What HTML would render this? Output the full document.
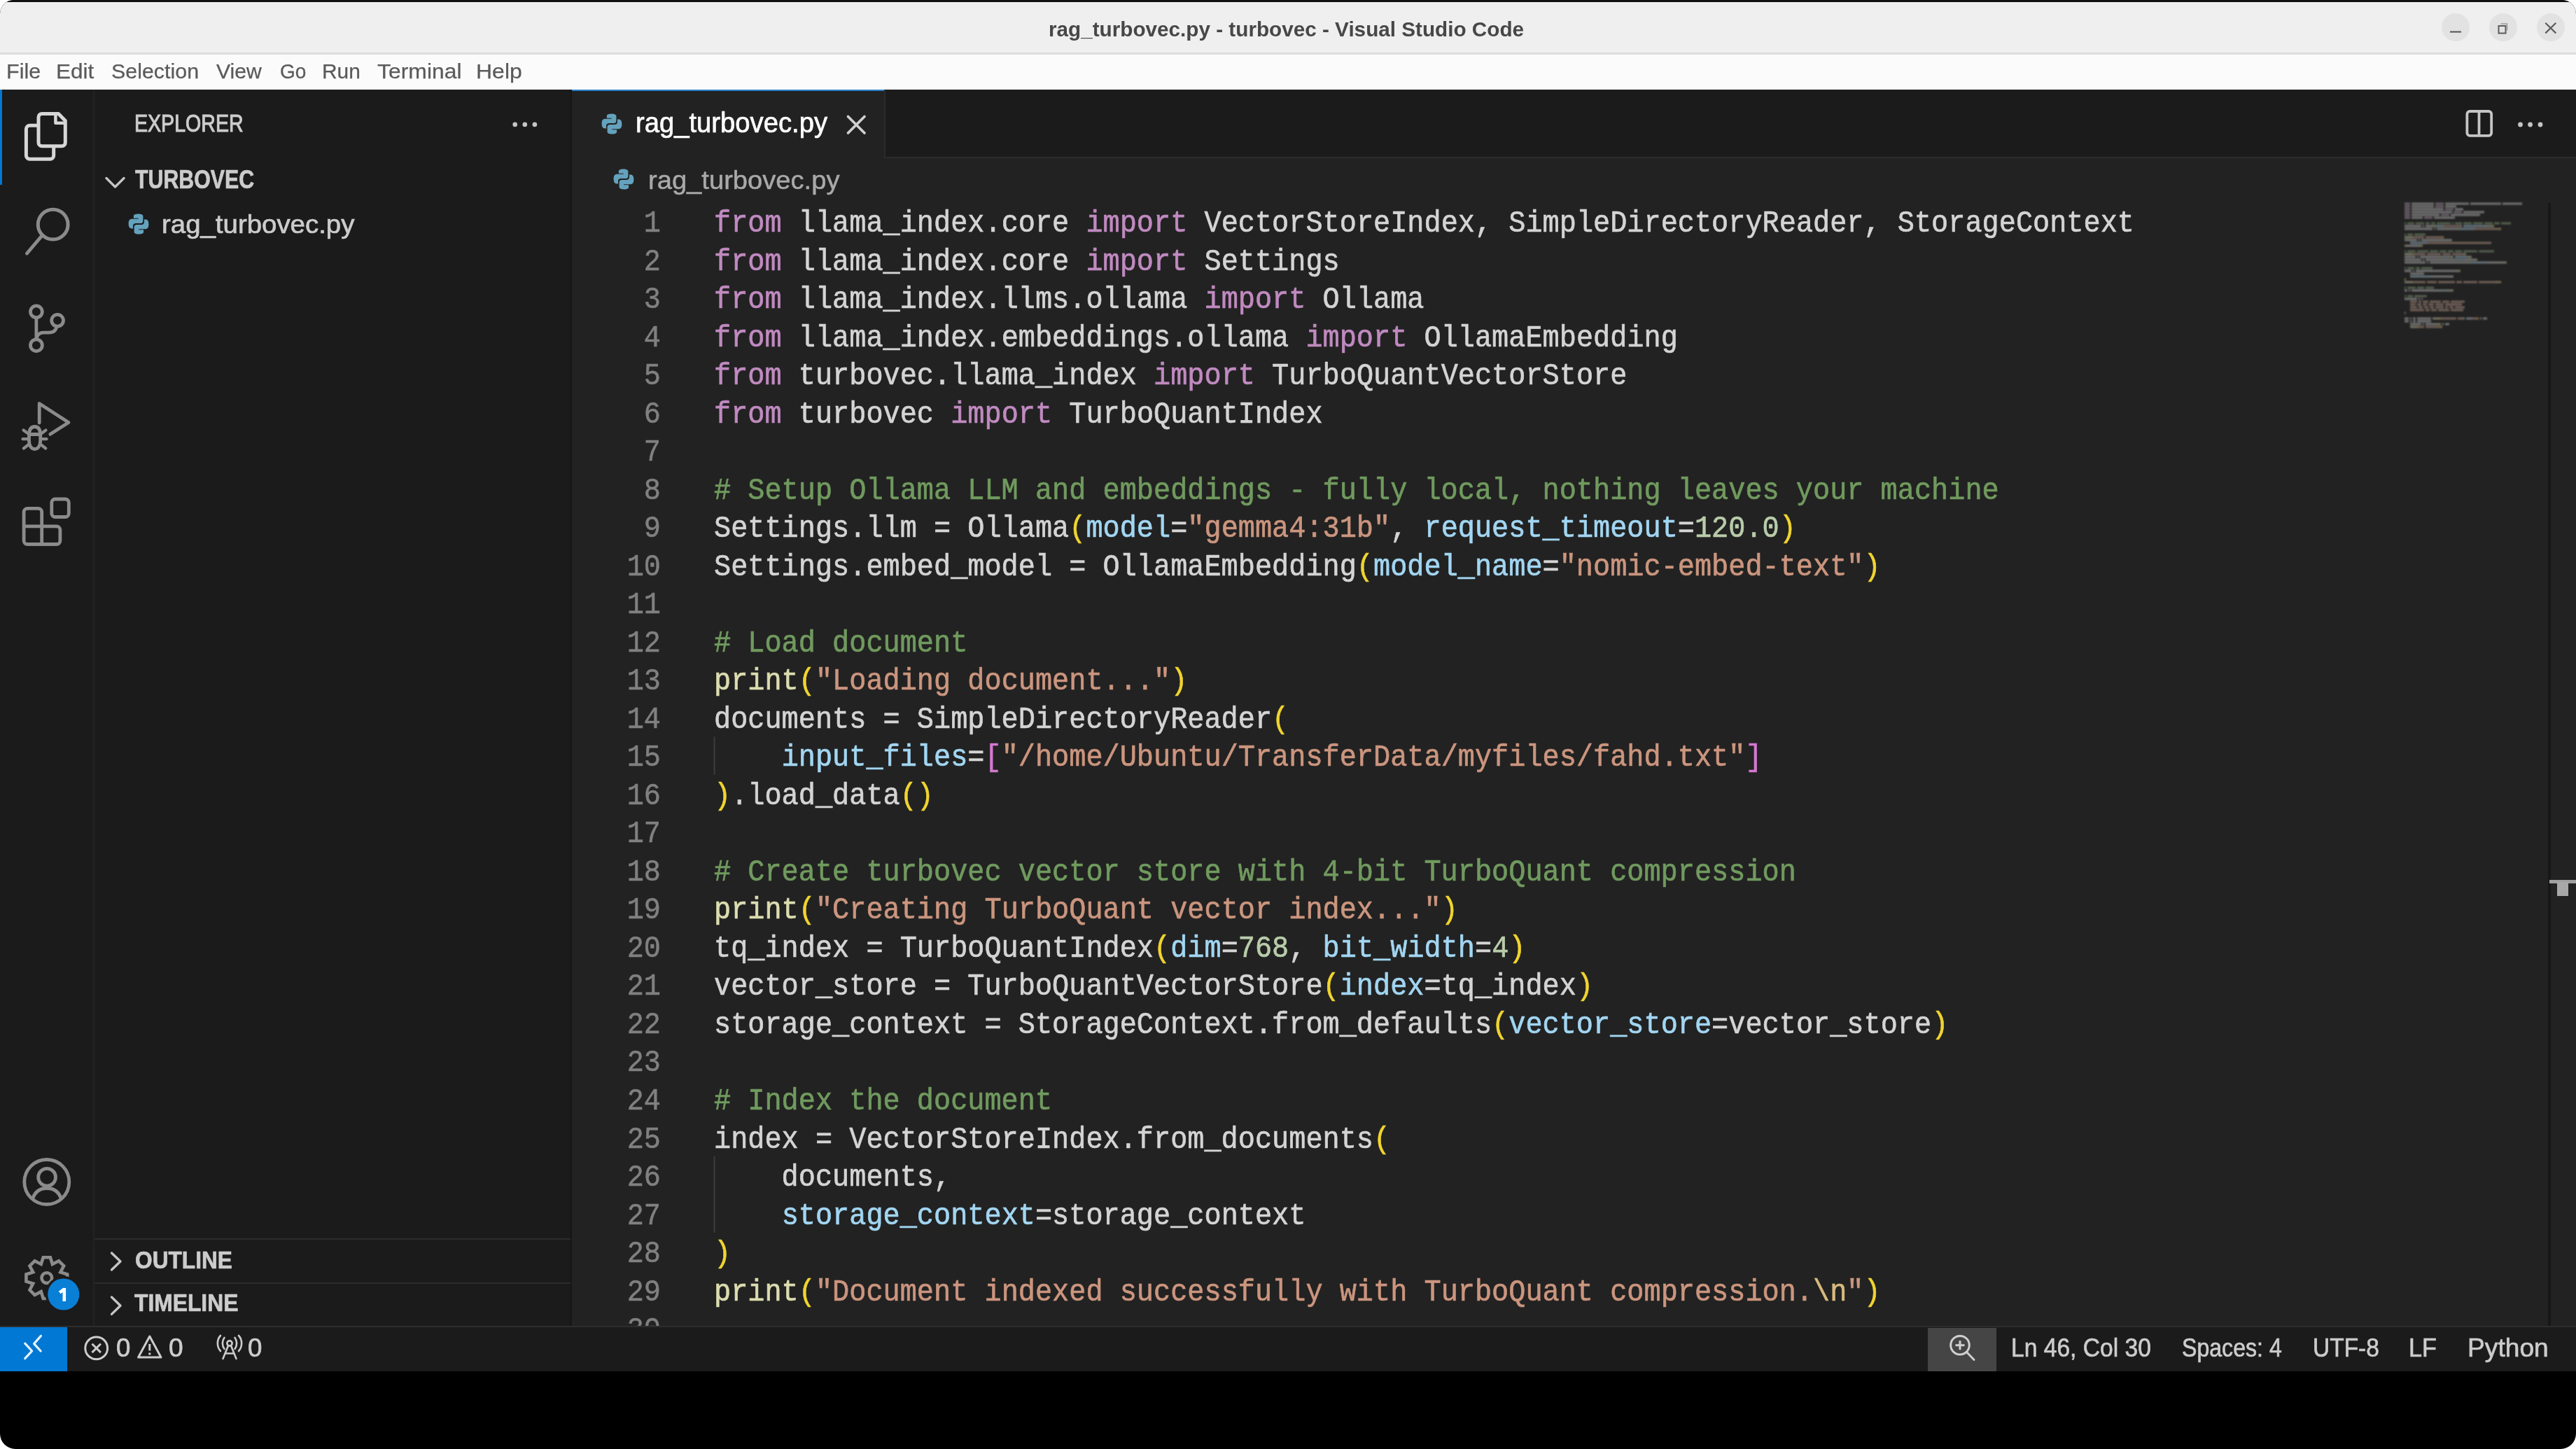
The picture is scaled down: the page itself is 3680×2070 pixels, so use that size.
<!DOCTYPE html>
<html><head><meta charset="utf-8"><style>
html,body{margin:0;padding:0;}
body{width:3680px;height:2070px;overflow:hidden;background:#ffffff;position:relative;font-family:"Liberation Sans", sans-serif;}
#win{position:absolute;left:0;top:0;width:3680px;height:2070px;overflow:hidden;border-radius:20px 20px 22px 22px;background:#000;}
.abs{position:absolute;}
.t{position:absolute;white-space:pre;transform-origin:0 0;-webkit-text-stroke:0.7px currentColor;}
.cl{position:absolute;left:1020.0px;white-space:pre;font-family:"Liberation Mono", monospace;font-size:40.252px;line-height:54.52px;height:54.52px;color:#d4d4d4;-webkit-text-stroke:0.6px currentColor;transform:scaleY(1.08);transform-origin:0 37.97px;}
.ln{position:absolute;left:744px;-webkit-text-stroke:0.5px currentColor;width:200px;text-align:right;white-space:pre;font-family:"Liberation Mono", monospace;font-size:40.252px;line-height:54.52px;height:54.52px;color:#808080;transform:scaleY(1.08);transform-origin:0 37.97px;}
.kw{color:#c08ac0} .cm{color:#709a5e} .st{color:#cb957e} .pa{color:#a2d6f2} .nu{color:#b8ccaa} .fn{color:#dcdcb0} .b1{color:#f0d430} .b2{color:#d478d0} .es{color:#d7ba7d}
</style></head>
<body><div id="win">
<div class="abs" style="left:0;top:0;width:3680px;height:3px;background:#111"></div>
<div class="abs" style="left:0;top:3px;width:3680px;height:72px;background:#efefef"></div>
<div class="abs" style="left:0;top:75px;width:3680px;height:3px;background:#dddddd"></div>
<div class="abs" style="left:0;top:78px;width:3680px;height:50px;background:#fbfbfb"></div>
<div class="abs" style="left:3488px;top:19px;width:40px;height:40px;border-radius:50%;background:#e2e2e2"></div>
<div class="abs" style="left:3555.6px;top:19px;width:40px;height:40px;border-radius:50%;background:#e2e2e2"></div>
<div class="abs" style="left:3624px;top:19px;width:40px;height:40px;border-radius:50%;background:#e2e2e2"></div>
<svg class="abs" style="left:3480px;top:11px" width="56" height="56" viewBox="0 0 56 56"><line x1="20" y1="34.5" x2="36" y2="34.5" stroke="#5c5c5c" stroke-width="2.2"/></svg>
<svg class="abs" style="left:3548px;top:11px" width="56" height="56" viewBox="0 0 56 56"><rect x="21.5" y="26" width="10" height="10.5" fill="none" stroke="#5c5c5c" stroke-width="2"/><path d="M24.5 23 H33.5 V32.5" fill="none" stroke="#9a9a9a" stroke-width="1.4"/></svg>
<svg class="abs" style="left:3616px;top:11px" width="56" height="56" viewBox="0 0 56 56"><path d="M20.3 21.7 L35.3 36.4 M35.3 21.7 L20.3 36.4" stroke="#5c5c5c" stroke-width="2.2"/></svg>
<div class="abs" style="left:0;top:128px;width:3680px;height:1768px;background:#222222"></div>
<div class="abs" style="left:0;top:128px;width:133px;height:1768px;background:#1b1b1b"></div>
<div class="abs" style="left:133px;top:128px;width:2px;height:1768px;background:#222222"></div>
<div class="abs" style="left:0;top:128px;width:3px;height:136px;background:#0078d4"></div>
<div class="abs" style="left:135px;top:128px;width:680px;height:1768px;background:#1b1b1b"></div>
<div class="abs" style="left:814px;top:128px;width:3px;height:1768px;background:#171717"></div>
<div class="abs" style="left:135px;top:1769px;width:680px;height:2px;background:#2b2b2b"></div>
<div class="abs" style="left:135px;top:1832px;width:680px;height:2px;background:#2b2b2b"></div>
<div class="abs" style="left:817px;top:128px;width:2863px;height:96px;background:#1b1b1b"></div>
<div class="abs" style="left:817px;top:224px;width:2863px;height:2px;background:#2b2b2b"></div>
<div class="abs" style="left:817px;top:128px;width:446px;height:98px;background:#222222"></div>
<div class="abs" style="left:1263px;top:128px;width:2px;height:96px;background:#2b2b2b"></div>
<div class="abs" style="left:817px;top:128px;width:446px;height:2px;background:#2a7fc8"></div>
<div class="abs" style="left:3640px;top:290px;width:4px;height:1604px;background:#171717"></div>
<div class="abs" style="left:3642px;top:1257px;width:38px;height:5px;background:#a0a0a0"></div>
<div class="abs" style="left:3653px;top:1260px;width:16px;height:20px;background:#a8a8a8"></div>
<div class="abs" style="left:0;top:1894px;width:3680px;height:2px;background:#2d2d2d"></div>
<div class="abs" style="left:0;top:1896px;width:3680px;height:63px;background:#1b1b1b"></div>
<div class="abs" style="left:0;top:1896px;width:96px;height:63px;background:#0078d4"></div>
<div class="abs" style="left:2754px;top:1897px;width:98px;height:62px;background:#454545"></div>
<svg class="abs" style="left:182px;top:304px" width="32" height="32" viewBox="0 0 32 32"><path fill="#64a2bd" d="M15.6 1.5c-7.1 0-6.7 3.1-6.7 3.1v3.2h6.8v1H6.2S1.6 8.3 1.6 15.5s4 6.9 4 6.9h2.4v-3.3s-.1-4 3.9-4h6.7s3.8.1 3.8-3.7V5.2s.6-3.7-6.8-3.7z"/><path fill="#64a2bd" d="M16.4 30.5c7.1 0 6.7-3.1 6.7-3.1v-3.2h-6.8v-1h9.5s4.6.5 4.6-6.7-4-6.9-4-6.9H24v3.3s.1 4-3.9 4h-6.7s-3.8-.1-3.8 3.7v6.3s-.6 3.6 6.8 3.6z"/></svg>
<svg class="abs" style="left:858px;top:161px" width="32" height="32" viewBox="0 0 32 32"><path fill="#64a2bd" d="M15.6 1.5c-7.1 0-6.7 3.1-6.7 3.1v3.2h6.8v1H6.2S1.6 8.3 1.6 15.5s4 6.9 4 6.9h2.4v-3.3s-.1-4 3.9-4h6.7s3.8.1 3.8-3.7V5.2s.6-3.7-6.8-3.7z"/><path fill="#64a2bd" d="M16.4 30.5c7.1 0 6.7-3.1 6.7-3.1v-3.2h-6.8v-1h9.5s4.6.5 4.6-6.7-4-6.9-4-6.9H24v3.3s.1 4-3.9 4h-6.7s-3.8-.1-3.8 3.7v6.3s-.6 3.6 6.8 3.6z"/></svg>
<svg class="abs" style="left:875px;top:240px" width="32" height="32" viewBox="0 0 32 32"><path fill="#64a2bd" d="M15.6 1.5c-7.1 0-6.7 3.1-6.7 3.1v3.2h6.8v1H6.2S1.6 8.3 1.6 15.5s4 6.9 4 6.9h2.4v-3.3s-.1-4 3.9-4h6.7s3.8.1 3.8-3.7V5.2s.6-3.7-6.8-3.7z"/><path fill="#64a2bd" d="M16.4 30.5c7.1 0 6.7-3.1 6.7-3.1v-3.2h-6.8v-1h9.5s4.6.5 4.6-6.7-4-6.9-4-6.9H24v3.3s.1 4-3.9 4h-6.7s-3.8-.1-3.8 3.7v6.3s-.6 3.6 6.8 3.6z"/></svg>
<div class="t" style="left:1497.67px;top:26.55px;font-size:29.35px;line-height:29.35px;color:#474747;font-weight:bold;transform:scaleX(1.0117);-webkit-text-stroke:0.0px currentColor">rag_turbovec.py - turbovec - Visual Studio Code</div>
<div class="t" style="left:8.76px;top:87.28px;font-size:30.14px;line-height:30.14px;color:#5a5a5a;transform:scaleX(1.0129);-webkit-text-stroke:0.25px currentColor">File</div>
<div class="t" style="left:80.08px;top:87.28px;font-size:30.14px;line-height:30.14px;color:#5a5a5a;transform:scaleX(1.0456);-webkit-text-stroke:0.25px currentColor">Edit</div>
<div class="t" style="left:159.43px;top:87.28px;font-size:30.14px;line-height:30.14px;color:#5a5a5a;transform:scaleX(1.0090);-webkit-text-stroke:0.25px currentColor">Selection</div>
<div class="t" style="left:309.20px;top:87.28px;font-size:30.14px;line-height:30.14px;color:#5a5a5a;transform:scaleX(1.0019);-webkit-text-stroke:0.25px currentColor">View</div>
<div class="t" style="left:399.90px;top:87.28px;font-size:30.14px;line-height:30.14px;color:#5a5a5a;transform:scaleX(0.9289);-webkit-text-stroke:0.25px currentColor">Go</div>
<div class="t" style="left:460.30px;top:87.28px;font-size:30.14px;line-height:30.14px;color:#5a5a5a;transform:scaleX(0.9932);-webkit-text-stroke:0.25px currentColor">Run</div>
<div class="t" style="left:539.36px;top:87.28px;font-size:30.14px;line-height:30.14px;color:#5a5a5a;transform:scaleX(1.0589);-webkit-text-stroke:0.25px currentColor">Terminal</div>
<div class="t" style="left:680.44px;top:87.28px;font-size:30.14px;line-height:30.14px;color:#5a5a5a;transform:scaleX(1.0626);-webkit-text-stroke:0.25px currentColor">Help</div>
<div class="t" style="left:192.21px;top:159.41px;font-size:35.65px;line-height:35.65px;color:#cccccc;transform:scaleX(0.8018);-webkit-text-stroke:1.1px currentColor">EXPLORER</div>
<div class="t" style="left:193.20px;top:238.61px;font-size:36.83px;line-height:36.83px;color:#cccccc;font-weight:bold;transform:scaleX(0.8236);-webkit-text-stroke:0.7px currentColor">TURBOVEC</div>
<div class="t" style="left:230.50px;top:302.00px;font-size:37.79px;line-height:37.79px;color:#cccccc;transform:scaleX(1.0166);-webkit-text-stroke:0.7px currentColor">rag_turbovec.py</div>
<div class="t" style="left:907.52px;top:155.13px;font-size:40.00px;line-height:40.00px;color:#ffffff;transform:scaleX(0.9552);-webkit-text-stroke:0.7px currentColor">rag_turbovec.py</div>
<div class="t" style="left:925.52px;top:239.12px;font-size:37.66px;line-height:37.66px;color:#a9a9a9;transform:scaleX(1.0128);-webkit-text-stroke:0.5px currentColor">rag_turbovec.py</div>
<div class="t" style="left:192.53px;top:1782.89px;font-size:35.68px;line-height:35.68px;color:#cccccc;font-weight:bold;transform:scaleX(0.8878);-webkit-text-stroke:0.7px currentColor">OUTLINE</div>
<div class="t" style="left:192.48px;top:1844.49px;font-size:35.68px;line-height:35.68px;color:#cccccc;font-weight:bold;transform:scaleX(0.8912);-webkit-text-stroke:0.7px currentColor">TIMELINE</div>
<div class="t" style="left:165.72px;top:1907.12px;font-size:37.54px;line-height:37.54px;color:#cccccc;transform:scaleX(0.9777);-webkit-text-stroke:0.7px currentColor">0</div>
<div class="t" style="left:240.70px;top:1907.12px;font-size:37.54px;line-height:37.54px;color:#cccccc;transform:scaleX(0.9887);-webkit-text-stroke:0.7px currentColor">0</div>
<div class="t" style="left:354.32px;top:1907.12px;font-size:37.54px;line-height:37.54px;color:#cccccc;transform:scaleX(0.9777);-webkit-text-stroke:0.7px currentColor">0</div>
<div class="t" style="left:2873.31px;top:1907.12px;font-size:37.54px;line-height:37.54px;color:#cccccc;transform:scaleX(0.8953);-webkit-text-stroke:0.7px currentColor">Ln 46, Col 30</div>
<div class="t" style="left:3117.06px;top:1907.12px;font-size:37.54px;line-height:37.54px;color:#cccccc;transform:scaleX(0.8553);-webkit-text-stroke:0.7px currentColor">Spaces: 4</div>
<div class="t" style="left:3304.49px;top:1907.12px;font-size:37.54px;line-height:37.54px;color:#cccccc;transform:scaleX(0.8923);-webkit-text-stroke:0.7px currentColor">UTF-8</div>
<div class="t" style="left:3441.26px;top:1907.12px;font-size:37.54px;line-height:37.54px;color:#cccccc;transform:scaleX(0.9124);-webkit-text-stroke:0.7px currentColor">LF</div>
<div class="t" style="left:3524.53px;top:1907.12px;font-size:37.54px;line-height:37.54px;color:#cccccc;transform:scaleX(0.9905);-webkit-text-stroke:0.7px currentColor">Python</div>
<div class="abs" style="left:0;top:226px;width:3640px;height:1668px;overflow:hidden"><div class="ln" style="top:67.03px">1</div><div class="cl" style="top:67.03px"><span class="kw">from</span> llama_index.core <span class="kw">import</span> VectorStoreIndex, SimpleDirectoryReader, StorageContext</div><div class="ln" style="top:121.55px">2</div><div class="cl" style="top:121.55px"><span class="kw">from</span> llama_index.core <span class="kw">import</span> Settings</div><div class="ln" style="top:176.07px">3</div><div class="cl" style="top:176.07px"><span class="kw">from</span> llama_index.llms.ollama <span class="kw">import</span> Ollama</div><div class="ln" style="top:230.59px">4</div><div class="cl" style="top:230.59px"><span class="kw">from</span> llama_index.embeddings.ollama <span class="kw">import</span> OllamaEmbedding</div><div class="ln" style="top:285.11px">5</div><div class="cl" style="top:285.11px"><span class="kw">from</span> turbovec.llama_index <span class="kw">import</span> TurboQuantVectorStore</div><div class="ln" style="top:339.63px">6</div><div class="cl" style="top:339.63px"><span class="kw">from</span> turbovec <span class="kw">import</span> TurboQuantIndex</div><div class="ln" style="top:394.15px">7</div><div class="cl" style="top:394.15px"></div><div class="ln" style="top:448.67px">8</div><div class="cl" style="top:448.67px"><span class="cm"># Setup Ollama LLM and embeddings - fully local, nothing leaves your machine</span></div><div class="ln" style="top:503.19px">9</div><div class="cl" style="top:503.19px">Settings.llm = Ollama<span class="b1">(</span><span class="pa">model</span>=<span class="st">&quot;gemma4:31b&quot;</span>, <span class="pa">request_timeout</span>=<span class="nu">120.0</span><span class="b1">)</span></div><div class="ln" style="top:557.71px">10</div><div class="cl" style="top:557.71px">Settings.embed_model = OllamaEmbedding<span class="b1">(</span><span class="pa">model_name</span>=<span class="st">&quot;nomic-embed-text&quot;</span><span class="b1">)</span></div><div class="ln" style="top:612.23px">11</div><div class="cl" style="top:612.23px"></div><div class="ln" style="top:666.75px">12</div><div class="cl" style="top:666.75px"><span class="cm"># Load document</span></div><div class="ln" style="top:721.27px">13</div><div class="cl" style="top:721.27px"><span class="fn">print</span><span class="b1">(</span><span class="st">&quot;Loading document...&quot;</span><span class="b1">)</span></div><div class="ln" style="top:775.79px">14</div><div class="cl" style="top:775.79px">documents = SimpleDirectoryReader<span class="b1">(</span></div><div class="ln" style="top:830.31px">15</div><div class="cl" style="top:830.31px">    <span class="pa">input_files</span>=<span class="b2">[</span><span class="st">&quot;/home/Ubuntu/TransferData/myfiles/fahd.txt&quot;</span><span class="b2">]</span></div><div class="ln" style="top:884.83px">16</div><div class="cl" style="top:884.83px"><span class="b1">)</span>.load_data<span class="b1">()</span></div><div class="ln" style="top:939.35px">17</div><div class="cl" style="top:939.35px"></div><div class="ln" style="top:993.87px">18</div><div class="cl" style="top:993.87px"><span class="cm"># Create turbovec vector store with 4-bit TurboQuant compression</span></div><div class="ln" style="top:1048.39px">19</div><div class="cl" style="top:1048.39px"><span class="fn">print</span><span class="b1">(</span><span class="st">&quot;Creating TurboQuant vector index...&quot;</span><span class="b1">)</span></div><div class="ln" style="top:1102.91px">20</div><div class="cl" style="top:1102.91px">tq_index = TurboQuantIndex<span class="b1">(</span><span class="pa">dim</span>=<span class="nu">768</span>, <span class="pa">bit_width</span>=<span class="nu">4</span><span class="b1">)</span></div><div class="ln" style="top:1157.43px">21</div><div class="cl" style="top:1157.43px">vector_store = TurboQuantVectorStore<span class="b1">(</span><span class="pa">index</span>=tq_index<span class="b1">)</span></div><div class="ln" style="top:1211.95px">22</div><div class="cl" style="top:1211.95px">storage_context = StorageContext.from_defaults<span class="b1">(</span><span class="pa">vector_store</span>=vector_store<span class="b1">)</span></div><div class="ln" style="top:1266.47px">23</div><div class="cl" style="top:1266.47px"></div><div class="ln" style="top:1320.99px">24</div><div class="cl" style="top:1320.99px"><span class="cm"># Index the document</span></div><div class="ln" style="top:1375.51px">25</div><div class="cl" style="top:1375.51px">index = VectorStoreIndex.from_documents<span class="b1">(</span></div><div class="ln" style="top:1430.03px">26</div><div class="cl" style="top:1430.03px">    documents,</div><div class="ln" style="top:1484.55px">27</div><div class="cl" style="top:1484.55px">    <span class="pa">storage_context</span>=storage_context</div><div class="ln" style="top:1539.07px">28</div><div class="cl" style="top:1539.07px"><span class="b1">)</span></div><div class="ln" style="top:1593.59px">29</div><div class="cl" style="top:1593.59px"><span class="fn">print</span><span class="b1">(</span><span class="st">&quot;Document indexed successfully with TurboQuant compression.</span><span class="es">\n</span><span class="st">&quot;</span><span class="b1">)</span></div><div class="ln" style="top:1648.11px">30</div><div class="cl" style="top:1648.11px"></div></div>
<svg class="abs" style="left:0;top:0" width="3680" height="2070" viewBox="0 0 3680 2070"><g fill="none" stroke="#d6d6d6" stroke-width="5" stroke-linejoin="round"><path d="M55,179.3 H42.4 a5,5 0 0 0 -5,5 V222.3 a5,5 0 0 0 5,5 H71.7 a5,5 0 0 0 5,-5 V208.7"/><path d="M60,162.4 H83.5 L93.3,172.4 V203.7 a5,5 0 0 1 -5,5 H60 a5,5 0 0 1 -5,-5 V167.4 a5,5 0 0 1 5,-5 Z"/><path d="M79.4,162.4 V175.7 H93.3" stroke-width="4.5"/></g><g fill="none" stroke="#8b8b8b" stroke-width="5" stroke-linecap="round"><circle cx="75.7" cy="320.7" r="21.4"/><path d="M60.5,336 L38.5,362"/></g><g fill="none" stroke="#8b8b8b" stroke-width="4.8"><circle cx="51.9" cy="445.3" r="8.4"/><circle cx="51.9" cy="493.2" r="8.4"/><circle cx="82.1" cy="457.8" r="8.4"/><path d="M51.9,453.7 V484.8"/><path d="M81,466.2 C80,472 76,475.2 70,475.2 H62 C56,475.2 52.5,479 52,485"/></g><g fill="none" stroke="#8b8b8b" stroke-width="4.8" stroke-linejoin="round" stroke-linecap="round"><path d="M56.2,604 V576.5 L98,603.5 L71.8,620.2"/><path d="M41.5,622 C41.5,613 45,609.5 49.6,609.5 C54.2,609.5 57.7,613 57.7,622 V629 C57.7,637 54.2,641.5 49.6,641.5 C45,641.5 41.5,637 41.5,629 Z"/><path d="M42,620.5 H57.3"/><path d="M33.5,614.5 L41,620 M32.5,627.2 H41 M33.8,640.5 L41,635 M65.5,614.5 L58.2,620 M66.5,627.2 H58.2 M65.3,640.5 L58.2,635" stroke-width="4.2"/></g><g fill="none" stroke="#8b8b8b" stroke-width="4.8" stroke-linejoin="round"><path d="M34.1,731.4 a5,5 0 0 1 5,-5 H54.7 a5,5 0 0 1 5,5 V751.9 H80.9 a5,5 0 0 1 5,5 V772.5 a5,5 0 0 1 -5,5 H39.1 a5,5 0 0 1 -5,-5 Z"/><path d="M34.1,751.9 H59.7 V777.5"/><rect x="73.8" y="713" width="24.5" height="25.5" rx="5"/></g><g fill="none" stroke="#8b8b8b" stroke-width="4.8"><circle cx="66.8" cy="1688.5" r="32"/><circle cx="67.1" cy="1681.8" r="12.4"/><path d="M46.5,1713 C50,1702 57,1697.5 67,1697.5 C77,1697.5 84,1702 87.5,1713"/></g><g fill="none" stroke="#8b8b8b" stroke-width="4.6" stroke-linejoin="miter"><path d="M58.69,1806.01 L61.73,1796.23 L71.87,1796.23 L74.91,1806.01 L83.98,1801.25 L91.15,1808.42 L86.39,1817.49 L96.17,1820.53 L96.17,1830.67 L86.39,1833.71 L91.15,1842.78 L83.98,1849.95 L74.91,1845.19 L71.87,1854.97 L61.73,1854.97 L58.69,1845.19 L49.62,1849.95 L42.45,1842.78 L47.21,1833.71 L37.43,1830.67 L37.43,1820.53 L47.21,1817.49 L42.45,1808.42 L49.62,1801.25 Z"/><circle cx="66.8" cy="1825.6" r="7.3"/></g><circle cx="90.8" cy="1849" r="26" fill="#1b1b1b"/><circle cx="90.8" cy="1849" r="22.6" fill="#0a7fd6"/><path d="M91.8,1840 V1859 M91.8,1841.5 L85.2,1846.5" stroke="#ffffff" stroke-width="4.6" stroke-linejoin="round" fill="none"/><circle cx="735.7" cy="177.9" r="3.3" fill="#c5c5c5"/><circle cx="749.8" cy="177.9" r="3.3" fill="#c5c5c5"/><circle cx="763.9" cy="177.9" r="3.3" fill="#c5c5c5"/><path d="M152,254.5 L164.5,267 L177,254.5" fill="none" stroke="#c5c5c5" stroke-width="3.4" stroke-linecap="round" stroke-linejoin="round"/><path d="M159.5,1790 L172,1802 L159.5,1814" fill="none" stroke="#c5c5c5" stroke-width="3.4" stroke-linecap="round" stroke-linejoin="round"/><path d="M159.5,1853 L172,1865.2 L159.5,1877.4" fill="none" stroke="#c5c5c5" stroke-width="3.4" stroke-linecap="round" stroke-linejoin="round"/><path d="M1211.5,166.5 L1235,190 M1235,166.5 L1211.5,190" stroke="#d0d0d0" stroke-width="3.8" stroke-linecap="round"/><g fill="none" stroke="#c5c5c5" stroke-width="3.8"><rect x="3524.4" y="159" width="34.8" height="34.8" rx="4"/><path d="M3541.5,159 V193.8"/></g><circle cx="3600.5" cy="178" r="3.4" fill="#c5c5c5"/><circle cx="3614.6" cy="178" r="3.4" fill="#c5c5c5"/><circle cx="3629" cy="178" r="3.4" fill="#c5c5c5"/><filter id="mmb" x="-5%" y="-5%" width="110%" height="110%"><feGaussianBlur stdDeviation="0.9"/></filter><g opacity="0.5" filter="url(#mmb)"><rect x="3435" y="289.5" width="8" height="3" fill="#b7a0b6"/><rect x="3445" y="289.5" width="32" height="3" fill="#c8c8c8"/><rect x="3479" y="289.5" width="12" height="3" fill="#b7a0b6"/><rect x="3493" y="289.5" width="34" height="3" fill="#c8c8c8"/><rect x="3529" y="289.5" width="44" height="3" fill="#c8c8c8"/><rect x="3575" y="289.5" width="28" height="3" fill="#c8c8c8"/><rect x="3435" y="293.5" width="8" height="3" fill="#b7a0b6"/><rect x="3445" y="293.5" width="32" height="3" fill="#c8c8c8"/><rect x="3479" y="293.5" width="12" height="3" fill="#b7a0b6"/><rect x="3493" y="293.5" width="16" height="3" fill="#c8c8c8"/><rect x="3435" y="297.5" width="8" height="3" fill="#b7a0b6"/><rect x="3445" y="297.5" width="46" height="3" fill="#c8c8c8"/><rect x="3493" y="297.5" width="12" height="3" fill="#b7a0b6"/><rect x="3507" y="297.5" width="12" height="3" fill="#c8c8c8"/><rect x="3435" y="301.5" width="8" height="3" fill="#b7a0b6"/><rect x="3445" y="301.5" width="58" height="3" fill="#c8c8c8"/><rect x="3505" y="301.5" width="12" height="3" fill="#b7a0b6"/><rect x="3519" y="301.5" width="30" height="3" fill="#c8c8c8"/><rect x="3435" y="305.5" width="8" height="3" fill="#b7a0b6"/><rect x="3445" y="305.5" width="40" height="3" fill="#c8c8c8"/><rect x="3487" y="305.5" width="12" height="3" fill="#b7a0b6"/><rect x="3501" y="305.5" width="42" height="3" fill="#c8c8c8"/><rect x="3435" y="309.5" width="8" height="3" fill="#b7a0b6"/><rect x="3445" y="309.5" width="16" height="3" fill="#c8c8c8"/><rect x="3463" y="309.5" width="12" height="3" fill="#b7a0b6"/><rect x="3477" y="309.5" width="30" height="3" fill="#c8c8c8"/><rect x="3435" y="317.5" width="2" height="3" fill="#86a07a"/><rect x="3439" y="317.5" width="10" height="3" fill="#86a07a"/><rect x="3451" y="317.5" width="12" height="3" fill="#86a07a"/><rect x="3465" y="317.5" width="6" height="3" fill="#86a07a"/><rect x="3473" y="317.5" width="6" height="3" fill="#86a07a"/><rect x="3481" y="317.5" width="20" height="3" fill="#86a07a"/><rect x="3503" y="317.5" width="2" height="3" fill="#86a07a"/><rect x="3507" y="317.5" width="10" height="3" fill="#86a07a"/><rect x="3519" y="317.5" width="12" height="3" fill="#86a07a"/><rect x="3533" y="317.5" width="14" height="3" fill="#86a07a"/><rect x="3549" y="317.5" width="12" height="3" fill="#86a07a"/><rect x="3563" y="317.5" width="8" height="3" fill="#86a07a"/><rect x="3573" y="317.5" width="14" height="3" fill="#86a07a"/><rect x="3435" y="321.5" width="24" height="3" fill="#c8c8c8"/><rect x="3461" y="321.5" width="2" height="3" fill="#c8c8c8"/><rect x="3465" y="321.5" width="12" height="3" fill="#c8c8c8"/><rect x="3477" y="321.5" width="2" height="3" fill="#d8c860"/><rect x="3479" y="321.5" width="10" height="3" fill="#a9c9da"/><rect x="3489" y="321.5" width="2" height="3" fill="#c8c8c8"/><rect x="3491" y="321.5" width="24" height="3" fill="#c4a190"/><rect x="3515" y="321.5" width="2" height="3" fill="#c8c8c8"/><rect x="3519" y="321.5" width="30" height="3" fill="#a9c9da"/><rect x="3549" y="321.5" width="2" height="3" fill="#c8c8c8"/><rect x="3551" y="321.5" width="10" height="3" fill="#bcc8b4"/><rect x="3561" y="321.5" width="2" height="3" fill="#d8c860"/><rect x="3435" y="325.5" width="40" height="3" fill="#c8c8c8"/><rect x="3477" y="325.5" width="2" height="3" fill="#c8c8c8"/><rect x="3481" y="325.5" width="30" height="3" fill="#c8c8c8"/><rect x="3511" y="325.5" width="2" height="3" fill="#d8c860"/><rect x="3513" y="325.5" width="20" height="3" fill="#a9c9da"/><rect x="3533" y="325.5" width="2" height="3" fill="#c8c8c8"/><rect x="3535" y="325.5" width="36" height="3" fill="#c4a190"/><rect x="3571" y="325.5" width="2" height="3" fill="#d8c860"/><rect x="3435" y="333.5" width="2" height="3" fill="#86a07a"/><rect x="3439" y="333.5" width="8" height="3" fill="#86a07a"/><rect x="3449" y="333.5" width="16" height="3" fill="#86a07a"/><rect x="3435" y="337.5" width="10" height="3" fill="#d0d0b4"/><rect x="3445" y="337.5" width="2" height="3" fill="#d8c860"/><rect x="3447" y="337.5" width="16" height="3" fill="#c4a190"/><rect x="3465" y="337.5" width="24" height="3" fill="#c4a190"/><rect x="3489" y="337.5" width="2" height="3" fill="#d8c860"/><rect x="3435" y="341.5" width="18" height="3" fill="#c8c8c8"/><rect x="3455" y="341.5" width="2" height="3" fill="#c8c8c8"/><rect x="3459" y="341.5" width="42" height="3" fill="#c8c8c8"/><rect x="3501" y="341.5" width="2" height="3" fill="#d8c860"/><rect x="3443" y="345.5" width="22" height="3" fill="#a9c9da"/><rect x="3465" y="345.5" width="2" height="3" fill="#c8c8c8"/><rect x="3467" y="345.5" width="2" height="3" fill="#c494c2"/><rect x="3469" y="345.5" width="88" height="3" fill="#c4a190"/><rect x="3557" y="345.5" width="2" height="3" fill="#c494c2"/><rect x="3435" y="349.5" width="2" height="3" fill="#d8c860"/><rect x="3437" y="349.5" width="20" height="3" fill="#c8c8c8"/><rect x="3457" y="349.5" width="4" height="3" fill="#d8c860"/><rect x="3435" y="357.5" width="2" height="3" fill="#86a07a"/><rect x="3439" y="357.5" width="12" height="3" fill="#86a07a"/><rect x="3453" y="357.5" width="16" height="3" fill="#86a07a"/><rect x="3471" y="357.5" width="12" height="3" fill="#86a07a"/><rect x="3485" y="357.5" width="10" height="3" fill="#86a07a"/><rect x="3497" y="357.5" width="8" height="3" fill="#86a07a"/><rect x="3507" y="357.5" width="10" height="3" fill="#86a07a"/><rect x="3519" y="357.5" width="20" height="3" fill="#86a07a"/><rect x="3541" y="357.5" width="22" height="3" fill="#86a07a"/><rect x="3435" y="361.5" width="10" height="3" fill="#d0d0b4"/><rect x="3445" y="361.5" width="2" height="3" fill="#d8c860"/><rect x="3447" y="361.5" width="18" height="3" fill="#c4a190"/><rect x="3467" y="361.5" width="20" height="3" fill="#c4a190"/><rect x="3489" y="361.5" width="12" height="3" fill="#c4a190"/><rect x="3503" y="361.5" width="18" height="3" fill="#c4a190"/><rect x="3521" y="361.5" width="2" height="3" fill="#d8c860"/><rect x="3435" y="365.5" width="16" height="3" fill="#c8c8c8"/><rect x="3453" y="365.5" width="2" height="3" fill="#c8c8c8"/><rect x="3457" y="365.5" width="30" height="3" fill="#c8c8c8"/><rect x="3487" y="365.5" width="2" height="3" fill="#d8c860"/><rect x="3489" y="365.5" width="6" height="3" fill="#a9c9da"/><rect x="3495" y="365.5" width="2" height="3" fill="#c8c8c8"/><rect x="3497" y="365.5" width="6" height="3" fill="#bcc8b4"/><rect x="3503" y="365.5" width="2" height="3" fill="#c8c8c8"/><rect x="3507" y="365.5" width="18" height="3" fill="#a9c9da"/><rect x="3525" y="365.5" width="2" height="3" fill="#c8c8c8"/><rect x="3527" y="365.5" width="2" height="3" fill="#bcc8b4"/><rect x="3529" y="365.5" width="2" height="3" fill="#d8c860"/><rect x="3435" y="369.5" width="24" height="3" fill="#c8c8c8"/><rect x="3461" y="369.5" width="2" height="3" fill="#c8c8c8"/><rect x="3465" y="369.5" width="42" height="3" fill="#c8c8c8"/><rect x="3507" y="369.5" width="2" height="3" fill="#d8c860"/><rect x="3509" y="369.5" width="10" height="3" fill="#a9c9da"/><rect x="3519" y="369.5" width="18" height="3" fill="#c8c8c8"/><rect x="3537" y="369.5" width="2" height="3" fill="#d8c860"/><rect x="3435" y="373.5" width="30" height="3" fill="#c8c8c8"/><rect x="3467" y="373.5" width="2" height="3" fill="#c8c8c8"/><rect x="3471" y="373.5" width="56" height="3" fill="#c8c8c8"/><rect x="3527" y="373.5" width="2" height="3" fill="#d8c860"/><rect x="3529" y="373.5" width="24" height="3" fill="#a9c9da"/><rect x="3553" y="373.5" width="26" height="3" fill="#c8c8c8"/><rect x="3579" y="373.5" width="2" height="3" fill="#d8c860"/><rect x="3435" y="381.5" width="2" height="3" fill="#86a07a"/><rect x="3439" y="381.5" width="10" height="3" fill="#86a07a"/><rect x="3451" y="381.5" width="6" height="3" fill="#86a07a"/><rect x="3459" y="381.5" width="16" height="3" fill="#86a07a"/><rect x="3435" y="385.5" width="10" height="3" fill="#c8c8c8"/><rect x="3447" y="385.5" width="2" height="3" fill="#c8c8c8"/><rect x="3451" y="385.5" width="62" height="3" fill="#c8c8c8"/><rect x="3513" y="385.5" width="2" height="3" fill="#d8c860"/><rect x="3443" y="389.5" width="20" height="3" fill="#c8c8c8"/><rect x="3443" y="393.5" width="30" height="3" fill="#a9c9da"/><rect x="3473" y="393.5" width="32" height="3" fill="#c8c8c8"/><rect x="3435" y="397.5" width="2" height="3" fill="#d8c860"/><rect x="3435" y="401.5" width="10" height="3" fill="#d0d0b4"/><rect x="3445" y="401.5" width="2" height="3" fill="#d8c860"/><rect x="3447" y="401.5" width="18" height="3" fill="#c4a190"/><rect x="3467" y="401.5" width="14" height="3" fill="#c4a190"/><rect x="3483" y="401.5" width="24" height="3" fill="#c4a190"/><rect x="3509" y="401.5" width="8" height="3" fill="#c4a190"/><rect x="3519" y="401.5" width="20" height="3" fill="#c4a190"/><rect x="3541" y="401.5" width="24" height="3" fill="#c4a190"/><rect x="3565" y="401.5" width="4" height="3" fill="#d0bc94"/><rect x="3569" y="401.5" width="2" height="3" fill="#c4a190"/><rect x="3571" y="401.5" width="2" height="3" fill="#d8c860"/><rect x="3435" y="409.5" width="2" height="3" fill="#86a07a"/><rect x="3439" y="409.5" width="12" height="3" fill="#86a07a"/><rect x="3453" y="409.5" width="10" height="3" fill="#86a07a"/><rect x="3465" y="409.5" width="12" height="3" fill="#86a07a"/><rect x="3435" y="413.5" width="4" height="3" fill="#c8c8c8"/><rect x="3441" y="413.5" width="2" height="3" fill="#c8c8c8"/><rect x="3445" y="413.5" width="42" height="3" fill="#c8c8c8"/><rect x="3487" y="413.5" width="2" height="3" fill="#d8c860"/><rect x="3489" y="413.5" width="6" height="3" fill="#a9c9da"/><rect x="3495" y="413.5" width="8" height="3" fill="#c8c8c8"/><rect x="3503" y="413.5" width="2" height="3" fill="#d8c860"/><rect x="3435" y="421.5" width="2" height="3" fill="#86a07a"/><rect x="3439" y="421.5" width="8" height="3" fill="#86a07a"/><rect x="3449" y="421.5" width="18" height="3" fill="#86a07a"/><rect x="3435" y="425.5" width="18" height="3" fill="#c8c8c8"/><rect x="3455" y="425.5" width="2" height="3" fill="#c8c8c8"/><rect x="3459" y="425.5" width="2" height="3" fill="#c494c2"/><rect x="3443" y="429.5" width="10" height="3" fill="#c4a190"/><rect x="3455" y="429.5" width="4" height="3" fill="#c4a190"/><rect x="3461" y="429.5" width="8" height="3" fill="#c4a190"/><rect x="3471" y="429.5" width="16" height="3" fill="#c4a190"/><rect x="3489" y="429.5" width="10" height="3" fill="#c4a190"/><rect x="3501" y="429.5" width="20" height="3" fill="#c4a190"/><rect x="3443" y="433.5" width="8" height="3" fill="#c4a190"/><rect x="3453" y="433.5" width="6" height="3" fill="#c4a190"/><rect x="3461" y="433.5" width="6" height="3" fill="#c4a190"/><rect x="3469" y="433.5" width="8" height="3" fill="#c4a190"/><rect x="3479" y="433.5" width="12" height="3" fill="#c4a190"/><rect x="3493" y="433.5" width="24" height="3" fill="#c4a190"/><rect x="3443" y="437.5" width="10" height="3" fill="#c4a190"/><rect x="3455" y="437.5" width="6" height="3" fill="#c4a190"/><rect x="3463" y="437.5" width="6" height="3" fill="#c4a190"/><rect x="3471" y="437.5" width="6" height="3" fill="#c4a190"/><rect x="3479" y="437.5" width="12" height="3" fill="#c4a190"/><rect x="3493" y="437.5" width="4" height="3" fill="#c4a190"/><rect x="3499" y="437.5" width="6" height="3" fill="#c4a190"/><rect x="3507" y="437.5" width="14" height="3" fill="#c4a190"/><rect x="3443" y="441.5" width="20" height="3" fill="#c4a190"/><rect x="3465" y="441.5" width="6" height="3" fill="#c4a190"/><rect x="3473" y="441.5" width="8" height="3" fill="#c4a190"/><rect x="3483" y="441.5" width="16" height="3" fill="#c4a190"/><rect x="3501" y="441.5" width="18" height="3" fill="#c4a190"/><rect x="3435" y="445.5" width="2" height="3" fill="#c494c2"/><rect x="3435" y="453.5" width="6" height="3" fill="#c8c8c8"/><rect x="3443" y="453.5" width="2" height="3" fill="#c8c8c8"/><rect x="3447" y="453.5" width="4" height="3" fill="#c8c8c8"/><rect x="3453" y="453.5" width="20" height="3" fill="#c8c8c8"/><rect x="3475" y="453.5" width="10" height="3" fill="#d0d0b4"/><rect x="3485" y="453.5" width="2" height="3" fill="#d8c860"/><rect x="3487" y="453.5" width="22" height="3" fill="#c4a190"/><rect x="3511" y="453.5" width="8" height="3" fill="#c4a190"/><rect x="3519" y="453.5" width="2" height="3" fill="#c8c8c8"/><rect x="3523" y="453.5" width="6" height="3" fill="#a9c9da"/><rect x="3529" y="453.5" width="2" height="3" fill="#c8c8c8"/><rect x="3531" y="453.5" width="8" height="3" fill="#c4a190"/><rect x="3539" y="453.5" width="2" height="3" fill="#d8c860"/><rect x="3543" y="453.5" width="2" height="3" fill="#c8c8c8"/><rect x="3547" y="453.5" width="6" height="3" fill="#c8c8c8"/><rect x="3435" y="457.5" width="6" height="3" fill="#c8c8c8"/><rect x="3443" y="457.5" width="2" height="3" fill="#c8c8c8"/><rect x="3447" y="457.5" width="4" height="3" fill="#c8c8c8"/><rect x="3453" y="457.5" width="20" height="3" fill="#c8c8c8"/><rect x="3443" y="461.5" width="16" height="3" fill="#c8c8c8"/><rect x="3461" y="461.5" width="2" height="3" fill="#c8c8c8"/><rect x="3465" y="461.5" width="16" height="3" fill="#c8c8c8"/><rect x="3481" y="461.5" width="2" height="3" fill="#d8c860"/><rect x="3483" y="461.5" width="2" height="3" fill="#c8c8c8"/><rect x="3485" y="461.5" width="2" height="3" fill="#d8c860"/><rect x="3489" y="461.5" width="2" height="3" fill="#c8c8c8"/><rect x="3493" y="461.5" width="6" height="3" fill="#c8c8c8"/><rect x="3443" y="465.5" width="10" height="3" fill="#d0d0b4"/><rect x="3453" y="465.5" width="2" height="3" fill="#d8c860"/><rect x="3455" y="465.5" width="8" height="3" fill="#c4a190"/><rect x="3465" y="465.5" width="22" height="3" fill="#c4a190"/><rect x="3487" y="465.5" width="2" height="3" fill="#d8c860"/></g><rect x="1019.5" y="1052.3" width="2" height="54.5" fill="#3c3c3c"/><rect x="1019.5" y="1652.0" width="2" height="109.0" fill="#3c3c3c"/><g fill="none" stroke="#e6f3ff" stroke-width="3.2" stroke-linecap="round" stroke-linejoin="round"><path d="M35.7,1919.2 L45.7,1930 L35.7,1940.7"/><path d="M58.5,1908.4 L48.6,1919.6 L58.1,1930"/></g><g fill="none" stroke="#cccccc" stroke-width="3"><circle cx="137.7" cy="1925.9" r="15.9"/><path d="M131.5,1919.7 L143.9,1932.1 M143.9,1919.7 L131.5,1932.1"/></g><g fill="none" stroke="#cccccc" stroke-width="3" stroke-linejoin="round"><path d="M213.8,1909 L230,1939 H197.6 Z"/><path d="M213.8,1920 V1929.5"/></g><circle cx="213.8" cy="1934" r="1.8" fill="#cccccc"/><g fill="none" stroke="#cccccc" stroke-width="2.6" stroke-linecap="round"><circle cx="328" cy="1919" r="3.6"/><path d="M326,1922.5 L318.5,1941 M330,1922.5 L337.5,1941 M322,1933.5 H334"/><path d="M320.5,1911 C317,1915.5 317,1922.5 320.5,1927"/><path d="M335.5,1911 C339,1915.5 339,1922.5 335.5,1927"/><path d="M315,1908 C309.5,1914 309.5,1924 315,1930"/><path d="M341,1908 C346.5,1914 346.5,1924 341,1930"/></g><g fill="none" stroke="#d0d0d0" stroke-width="3"><circle cx="2800" cy="1921.7" r="13.3"/><path d="M2793.5,1921.7 H2806.5 M2800,1915.2 V1928.2"/><path d="M2809.5,1931.5 L2820,1942.5" stroke-linecap="round"/></g></svg>
</div></body></html>
